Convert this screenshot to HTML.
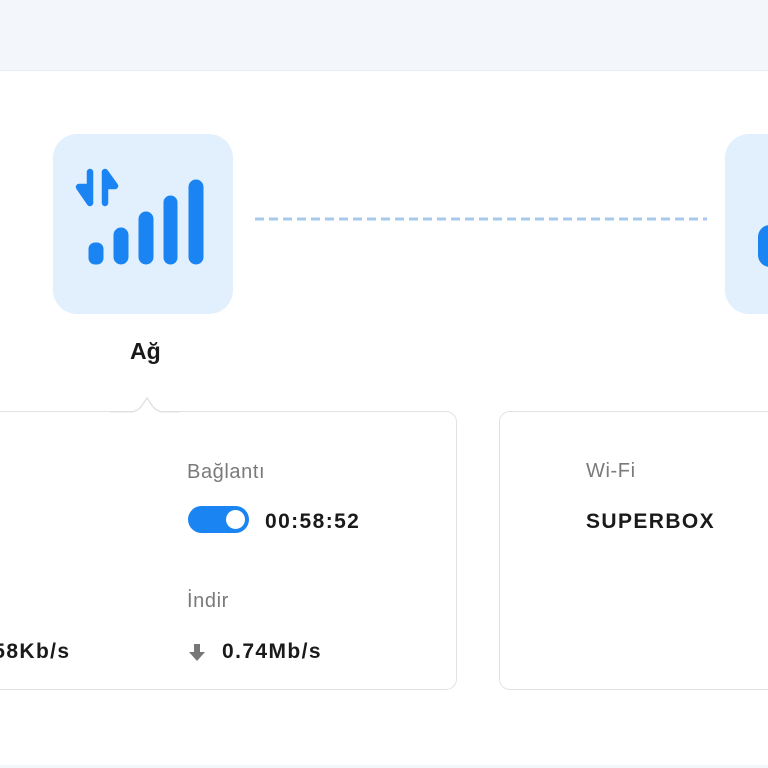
<!DOCTYPE html>
<html><head><meta charset="utf-8"><style>
body{margin:0;width:768px;height:768px;overflow:hidden;background:#f3f7fc;font-family:"Liberation Sans",sans-serif;position:relative}
.panel{position:absolute;left:0;top:70px;width:768px;height:694px;background:#fff;border-top:1px solid #e8eef5}
.box{position:absolute;top:134px;width:180px;height:180px;border-radius:24px;background:#e2effd}
.card{position:absolute;top:411px;height:277px;border:1.5px solid #e2e2e2;border-radius:11px;background:#fff}
.lbl{position:absolute;font-size:20px;color:#7a7a7a;letter-spacing:0.6px}
.val{position:absolute;font-size:21px;font-weight:bold;color:#1a1a1a;letter-spacing:1.4px}
</style></head><body>
<div class="panel"></div>
<div class="box" style="left:53px">
<svg width="180" height="180" viewBox="0 0 180 180">
<g fill="#1a84f2" stroke="#1a84f2" stroke-linejoin="round" stroke-linecap="round">
<rect x="36" y="109" width="14" height="21" rx="6"/>
<rect x="61" y="94" width="14" height="36" rx="7"/>
<rect x="86" y="78" width="14" height="52" rx="7"/>
<rect x="111" y="62" width="13" height="68" rx="6.5"/>
<rect x="136" y="46" width="14" height="84" rx="7"/>
<path d="M37 38 v31 L26 53 h11" stroke-width="6.5"/>
<path d="M52 69 v-31 L62 52 h-10" stroke-width="6.5"/>
</g></svg></div>
<div style="position:absolute;left:130px;top:338px;font-size:23px;font-weight:bold;color:#1a1a1a">Ağ</div>
<svg style="position:absolute;left:255px;top:216px" width="452" height="6"><line x1="0" y1="3" x2="452" y2="3" stroke="#a6caee" stroke-width="3" stroke-dasharray="9 5"/></svg>
<div class="box" style="left:725px"><div style="position:absolute;left:33px;top:91px;width:30px;height:42px;border-radius:12px;background:#1a84f2"></div></div>
<div class="card" style="left:-20px;width:475px"></div>
<svg style="position:absolute;left:110px;top:386px" width="70" height="28"><path d="M0 26 H20 Q28 26 33 18 L37 12 L41 18 Q46 26 54 26 H70" fill="#fff" stroke="#e2e2e2" stroke-width="1.5"/><rect x="0" y="26.5" width="70" height="2" fill="#fff"/></svg>
<div class="card" style="left:499px;width:300px"></div>
<div class="lbl" style="left:187px;top:461px">Bağlantı</div>
<div style="position:absolute;left:188px;top:506px;width:61px;height:27px;border-radius:14px;background:#1a84f2"><div style="position:absolute;right:4px;top:4px;width:19px;height:19px;border-radius:50%;background:#fff"></div></div>
<div class="val" style="left:265px;top:510px">00:58:52</div>
<div class="lbl" style="left:187px;top:590px">İndir</div>
<svg style="position:absolute;left:189px;top:644px" width="16" height="17"><path d="M5 0h6v8h5l-8 9l-8 -9h5z" fill="#777"/></svg>
<div class="val" style="left:222px;top:640px">0.74Mb/s</div>
<div class="val" style="left:-14px;top:640px">.58Kb/s</div>
<div class="lbl" style="left:586px;top:460px">Wi-Fi</div>
<div class="val" style="left:586px;top:510px">SUPERBOX</div>
</body></html>
